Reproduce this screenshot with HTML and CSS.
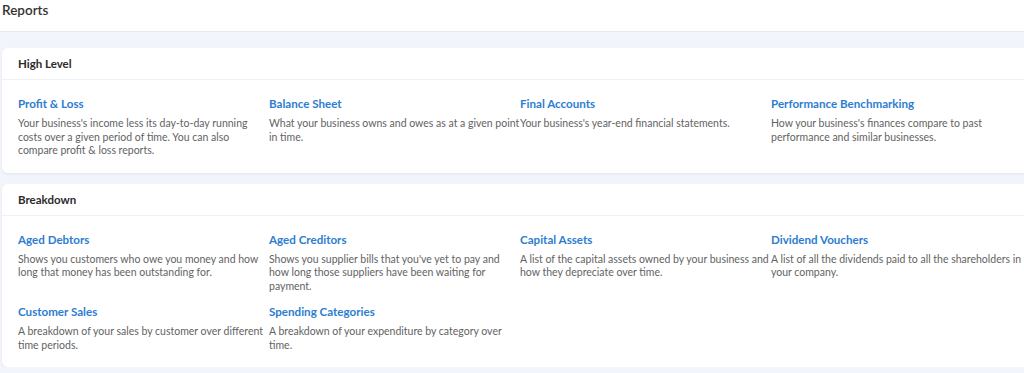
FILE: index.html
```html
<!DOCTYPE html>
<html lang="en">
<head>
    <meta charset="UTF-8">
    <meta name="viewport" content="width=device-width, initial-scale=1.0">
    <title>Reports</title>
    <link rel="stylesheet" href="styles.css">
</head>
<body>
    <div class="page-header">
        <h1>Reports</h1>
    </div>
    <div class="content">
        <div class="card">
            <div class="card-header">High Level</div>
            <div class="report-grid">
                <div class="report">
                    <a href="#" class="report-title">Profit &amp; Loss</a>
                    <p>Your business's income less its day-to-day running costs over a given period of time. You can also compare profit &amp; loss reports.</p>
                </div>
                <div class="report">
                    <a href="#" class="report-title">Balance Sheet</a>
                    <p>What your business owns and owes as at a given point in time.</p>
                </div>
                <div class="report">
                    <a href="#" class="report-title">Final Accounts</a>
                    <p>Your business's year-end financial statements.</p>
                </div>
                <div class="report">
                    <a href="#" class="report-title">Performance Benchmarking</a>
                    <p>How your business's finances compare to past performance and similar businesses.</p>
                </div>
            </div>
        </div>

        <div class="card">
            <div class="card-header">Breakdown</div>
            <div class="report-grid">
                <div class="report">
                    <a href="#" class="report-title">Aged Debtors</a>
                    <p>Shows you customers who owe you money and how long that money has been outstanding for.</p>
                </div>
                <div class="report">
                    <a href="#" class="report-title">Aged Creditors</a>
                    <p>Shows you supplier bills that you've yet to pay and how long those suppliers have been waiting for payment.</p>
                </div>
                <div class="report">
                    <a href="#" class="report-title">Capital Assets</a>
                    <p>A list of the capital assets owned by your business and how they depreciate over time.</p>
                </div>
                <div class="report">
                    <a href="#" class="report-title">Dividend Vouchers</a>
                    <p>A list of all the dividends paid to all the shareholders in your company.</p>
                </div>
                <div class="report">
                    <a href="#" class="report-title">Customer Sales</a>
                    <p>A breakdown of your sales by customer over different time periods.</p>
                </div>
                <div class="report">
                    <a href="#" class="report-title">Spending Categories</a>
                    <p>A breakdown of your expenditure by category over time.</p>
                </div>
            </div>
        </div>
    </div>
</body>
</html>
```

FILE: styles.css
```css
body {
    font-family: Lato, "Open Sans", sans-serif;
    margin: 0;
    background-color: #f2f5fb; /* light blue-gray page */
    overflow: hidden;
    color: #333;
}

.page-header {
    background-color: white;
    height: 31px;
    border-bottom: 1px solid #e6eaf1;
    padding-left: 2px;
}

.page-header h1 {
    margin: 0;
    font-size: 13.5px;
    font-weight: 600;
    line-height: 20px;
    color: #333;
}

.content {
    padding: 16px 0 0 2px;
    display: flex;
    flex-direction: column;
    gap: 11px;
}

.card {
    background-color: white;
    border-radius: 6px;
    box-shadow: 0 1px 3px rgba(40, 60, 100, 0.08);
    width: 1036px;
}

.card-header {
    height: 31px;
    line-height: 31px;
    padding-left: 16px;
    font-size: 11.5px;
    font-weight: 700;
    color: #2b2b2b;
    border-bottom: 1px solid #edf0f5;
}

.report-grid {
    display: grid;
    grid-template-columns: repeat(4, 1fr);
    row-gap: 11px;
    padding: 16px 16px 15px 16px;
}

.report-title {
    display: block;
    font-size: 11.6px;
    font-weight: 700;
    line-height: 16px;
    color: #2c7dd0; /* link blue */
    text-decoration: none;
    margin-bottom: 5px;
}

.report p {
    margin: 0;
    font-size: 10.5px;
    line-height: 13.5px;
    color: #636363;
}
```
